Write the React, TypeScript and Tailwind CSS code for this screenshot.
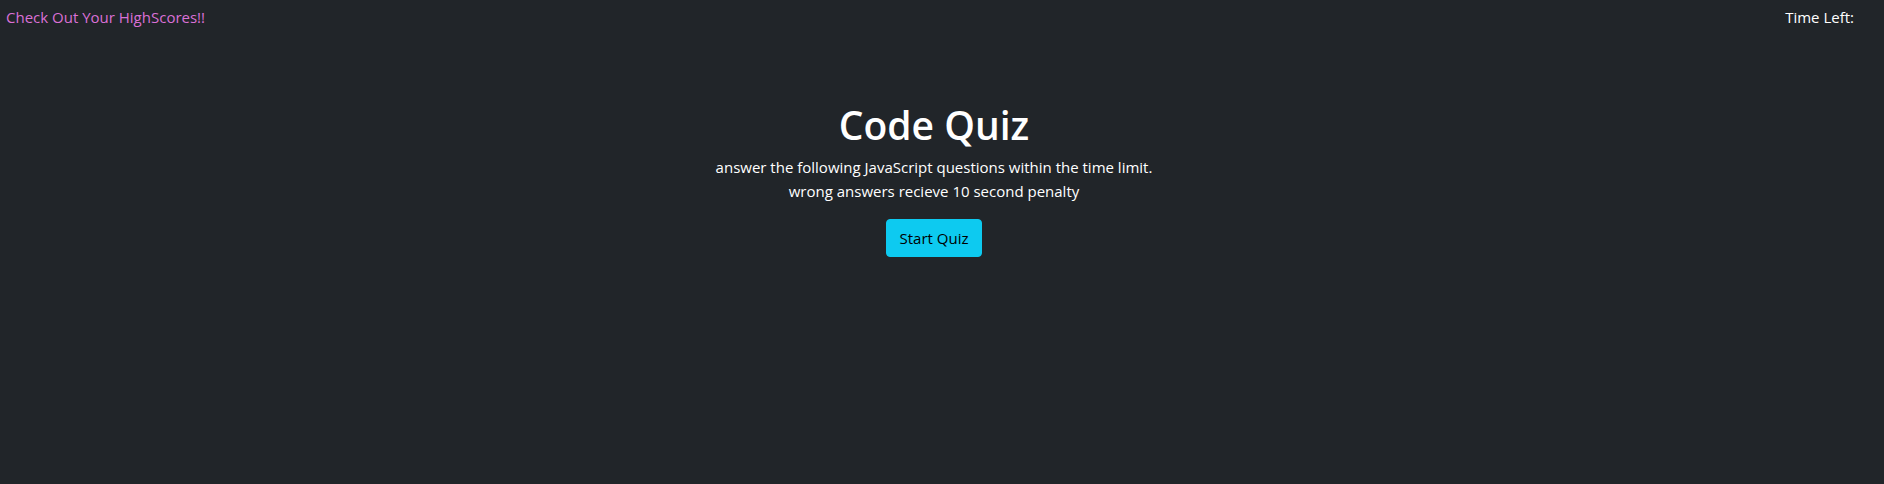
export default function App() {
  return (
    <div className="min-h-screen bg-[#212529] font-['Open_Sans','Noto_Sans',sans-serif] text-[15px] leading-6 text-white">
      <header className="flex justify-between pt-[5px] pr-[30px] pl-1.5">
        <a href="#highscores" className="text-[#da70d6]">Check Out Your HighScores!!</a>
        <div>Time Left:</div>
      </header>
      <main className="mt-18 flex flex-col items-center pr-4 text-center">
        <h1 className="mb-1.5 text-[39px] leading-12 font-semibold">Code Quiz</h1>
        <p className="mb-4">
          answer the following JavaScript questions within the time limit.
          <br />
          wrong answers recieve 10 second penalty
        </p>
        <button type="button" className="rounded border border-[#0dcaf0] bg-[#0dcaf0] px-[13px] py-1.5 text-black">Start Quiz</button>
      </main>
    </div>
  );
}
